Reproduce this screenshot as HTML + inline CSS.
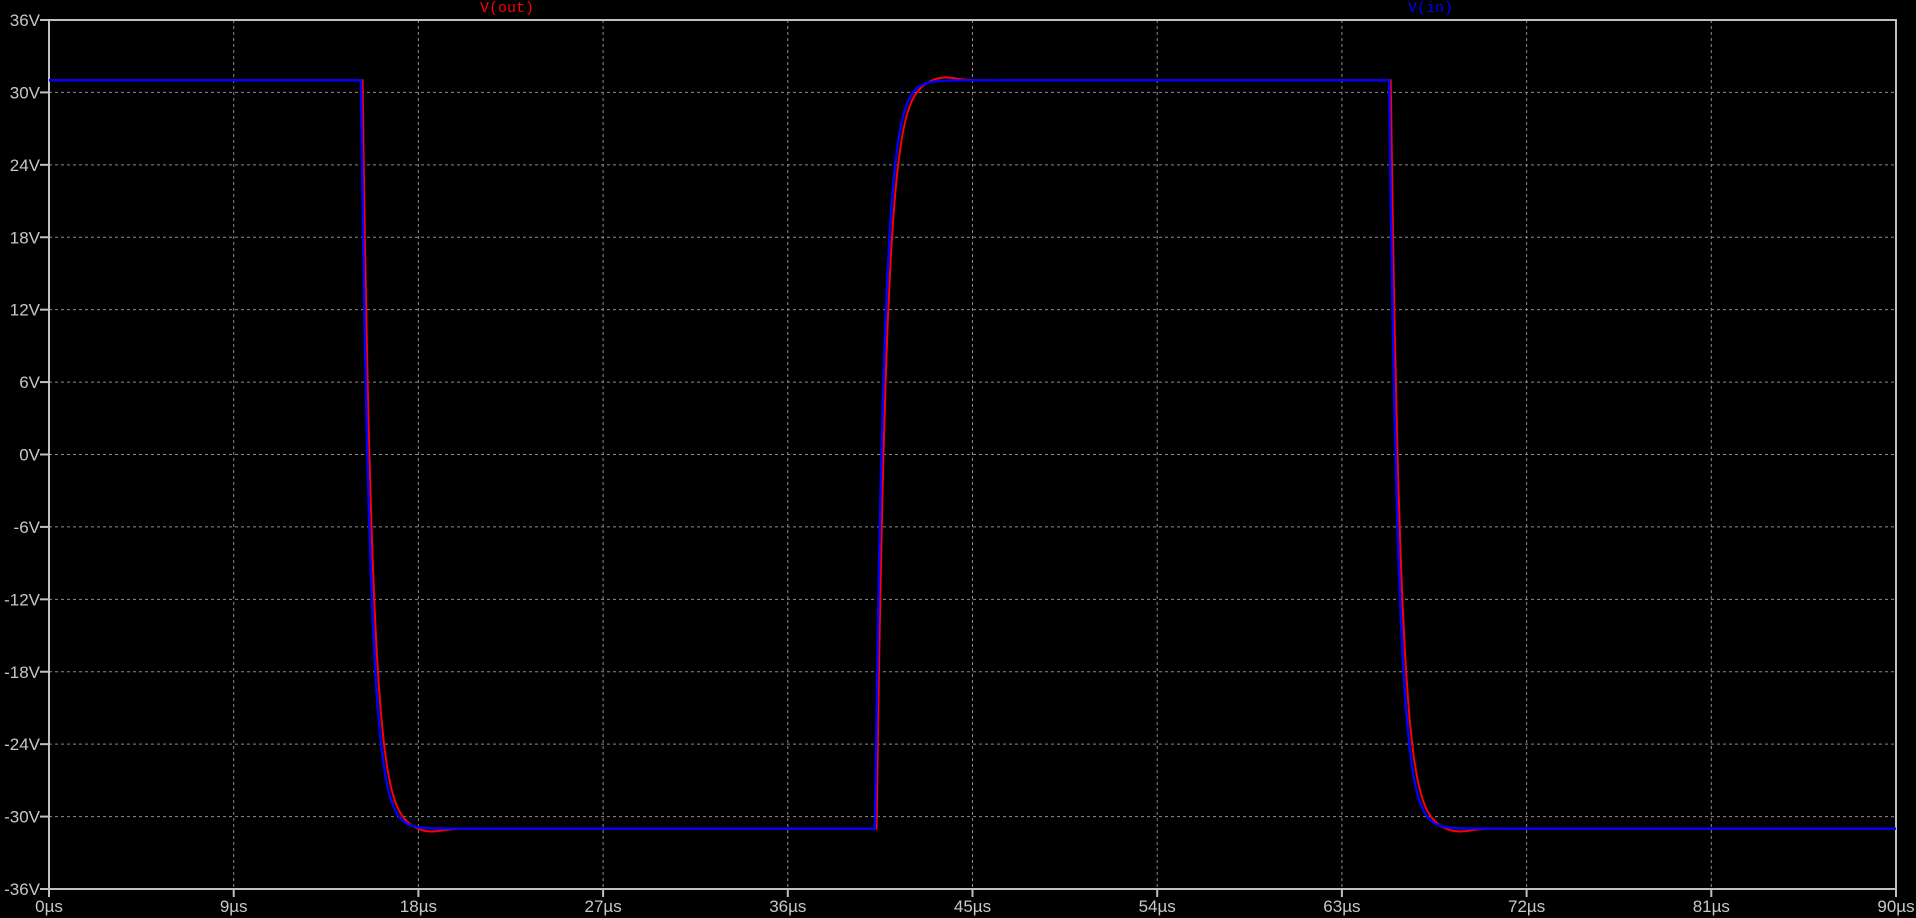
<!DOCTYPE html>
<html><head><meta charset="utf-8"><style>
html,body{margin:0;padding:0;background:#000;width:1916px;height:918px;overflow:hidden}
svg{display:block}
text{font-family:"Liberation Sans","DejaVu Sans",sans-serif;font-size:17px}
.t{font-family:"Liberation Mono",monospace;font-size:15px}
</style></head><body>
<svg id="s" width="1916" height="918" xmlns="http://www.w3.org/2000/svg">
<g id="grid" stroke="#8a8a8a" stroke-width="1" stroke-dasharray="3,3"></g>
<g id="axes" stroke="#c0c0c0" stroke-width="2" fill="none"></g>
<g id="lab" fill="#c8c8c8"></g>
<path id="red" fill="none" stroke="#ff0000" stroke-width="2"/>
<path id="blue" fill="none" stroke="#0000ff" stroke-width="2.4"/>
<text class="t" x="480" y="12" fill="#ff0000">V(out)</text>
<text class="t" x="1408" y="12" fill="#0000ff">V(in)</text>
</svg>
<script>
var L=49,T=20,R=1896,B=889;
var dx=(R-L)/10,dy=(B-T)/12;
var NS="http://www.w3.org/2000/svg";
function el(p,n,a,t){var e=document.createElementNS(NS,n);for(var k in a)e.setAttribute(k,a[k]);if(t)e.textContent=t;document.getElementById(p).appendChild(e);}
for(var i=1;i<12;i++){var y=T+i*dy;el("grid","line",{x1:L,y1:y,x2:R,y2:y});}
for(var i=1;i<10;i++){var x=L+i*dx;el("grid","line",{x1:x,y1:T,x2:x,y2:B});}
el("axes","rect",{x:L,y:T,width:R-L,height:B-T});
for(var i=0;i<=12;i++){var y=T+i*dy;el("axes","line",{x1:L-9,y1:y,x2:L,y2:y});
 var v=36-6*i;el("lab","text",{x:L-9,y:y+6,"text-anchor":"end"},v+"V");}
for(var i=0;i<=10;i++){var x=L+i*dx;el("axes","line",{x1:x,y1:B,x2:x,y2:B+8});
 el("lab","text",{x:x,y:B+23,"text-anchor":"middle"},(9*i)+"\u00b5s");}
function X(t){return L+t*(R-L)/90;}
function Y(v){return T+(36-v)*dy/6;}
function sig(t,red){
 var edges=[[15.2,-1],[40.25,1],[65.3,-1]];var v=31;
 for(var k=0;k<edges.length;k++){var t0=edges[k][0]+(red?0.08:0),d=edges[k][1];
  if(t>=t0){var s=t-t0,tau=red?0.48:0.45;
   var f=1-Math.exp(-s/tau);
   var base=d>0?-31:31;v=base+d*62*f;
   if(red)v+=d*0.3*Math.exp(-Math.pow((s-3.2)/0.9,2));
  }}
 return v;}
function path(red){var d="";for(var t=0;t<=90;t+=0.02){d+=(d?"L":"M")+X(t).toFixed(1)+" "+Y(sig(t,red)).toFixed(1);}return d;}
document.getElementById("red").setAttribute("d",path(true));
document.getElementById("blue").setAttribute("d",path(false));
</script>
</body></html>
